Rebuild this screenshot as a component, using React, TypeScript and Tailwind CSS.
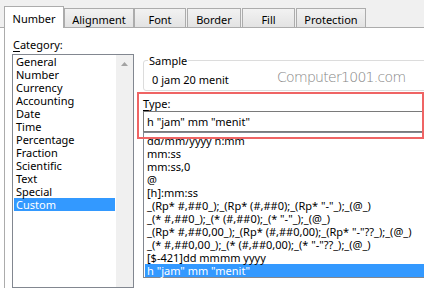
import React from 'react'

const tabs = [
  { label: 'Alignment', w: 'w-[70px]', ml: 'ml-0' },
  { label: 'Font', w: 'w-[52px]', ml: 'ml-0' },
  { label: 'Border', w: 'w-[54px]', ml: 'ml-[1px]' },
  { label: 'Fill', w: 'w-[53px]', ml: 'ml-[1px]' },
  { label: 'Protection', w: 'w-[70px]', ml: 'ml-[1px]' },
]

const categories = [
  'General', 'Number', 'Currency', 'Accounting', 'Date', 'Time',
  'Percentage', 'Fraction', 'Scientific', 'Text', 'Special', 'Custom',
]

const formats = [
  'dd/mm/yyyy h:mm',
  'mm:ss',
  'mm:ss,0',
  '@',
  '[h]:mm:ss',
  '_(Rp* #,##0_);_(Rp* (#,##0);_(Rp* "-"_);_(@_)',
  '_(* #,##0_);_(* (#,##0);_(* "-"_);_(@_)',
  '_(Rp* #,##0,00_);_(Rp* (#,##0,00);_(Rp* "-"??_);_(@_)',
  '_(* #,##0,00_);_(* (#,##0,00);_(* "-"??_);_(@_)',
  '[$-421]dd mmmm yyyy',
  'h "jam" mm "menit"',
]

export default function App() {
  return (
    <div className="w-[424px] h-[288px] overflow-hidden bg-white relative text-[11px] leading-[13px] text-black font-['Noto_Sans',sans-serif]">
      {/* Tab strip */}
      <div className="h-[28px] bg-[#f0f0f0] border-b border-[#acacac] flex items-end pl-[4px]">
        <div className="relative z-10 -mb-px h-[22px] w-[60px] bg-white border border-b-0 border-[#acacac] flex items-center justify-center pt-[1px]">
          Number
        </div>
        {tabs.map((t) => (
          <div
            key={t.label}
            className={`${t.w} ${t.ml} h-[19px] border border-b-0 border-[#acacac] bg-gradient-to-b from-[#f2f2f2] to-[#e3e3e3] flex items-center justify-center pt-[2px]`}
          >
            {t.label}
          </div>
        ))}
      </div>

      {/* Panel */}
      <div className="ml-[4px] h-[260px] border-l border-[#acacac] flex">
        {/* Category column */}
        <div className="w-[129px] pl-[7px] pt-[10px] flex flex-col">
          <div className="pl-[1px]">
            <span className="underline underline-offset-2">C</span>ategory:
          </div>
          <div className="mt-[3px] w-[122px] h-[240px] border border-[#828790] flex">
            <div className="w-[103px] px-[1px]">
              {categories.map((c) => (
                <div
                  key={c}
                  className={`h-[13px] pl-[2px] ${c === 'Custom' ? 'bg-[#3399ff] text-white' : ''}`}
                >
                  {c}
                </div>
              ))}
            </div>
            <div className="w-[17px] bg-[#f0f0f0] flex flex-col">
              <div className="h-[17px] flex items-center justify-center">
                <svg width="7" height="4" viewBox="0 0 7 4">
                  <path d="M0 4 L3.5 0 L7 4 Z" fill="#a3a3a3" />
                </svg>
              </div>
            </div>
          </div>
        </div>

        {/* Right column */}
        <div className="flex-1 pl-[9px] flex flex-col">
          <div className="relative mt-[32px] w-[300px] h-[31px] border border-[#dcdcdc] rounded-[3px] pl-[8px] pt-[12px]">
            <span className="absolute -top-[7px] left-[4px] bg-white px-[1px]">Sample</span>
            0 jam 20 menit
          </div>
          <div className="mt-[6px]">
            <span className="underline underline-offset-2">T</span>ype:
          </div>
          <div className="mt-[1px] w-[300px] h-[21px] border border-[#7a7a7a] flex items-center pl-[3px]">
            h "jam" mm "menit"
          </div>
          <div className="w-[300px] h-[146px] border border-[#828790] pt-[1px] pl-px">
            {formats.map((f, i) => (
              <div
                key={i}
                className={`h-[13px] pl-[2px] whitespace-pre ${i === formats.length - 1 ? 'bg-[#3399ff] text-white' : ''}`}
              >
                {f}
              </div>
            ))}
          </div>
        </div>
      </div>

      {/* Watermark */}
      <div className="absolute left-[277px] top-[68px] text-[14px] leading-[18px] tracking-[-0.7px] text-[#858585] font-['DejaVu_Sans',sans-serif] font-extralight">
        Computer1001.com
      </div>

      {/* Red highlight annotation */}
      <div className="absolute left-[137px] top-[92px] w-[287px] h-[47px] border-2 border-[#ef6464]" />
    </div>
  )
}
